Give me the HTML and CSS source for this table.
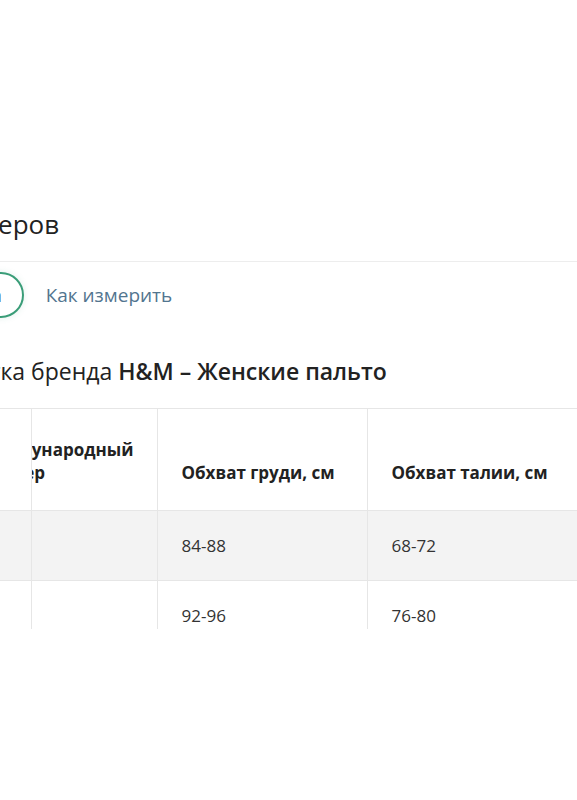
FILE: index.html
```html
<!DOCTYPE html>
<html lang="ru">
<head>
  <meta charset="UTF-8" />
  <meta name="viewport" content="width=device-width, initial-scale=1.0" />
  <title>Таблица размеров</title>
  <link rel="stylesheet" href="styles.css">
</head>
<body>
  <div class="modal">
    <h2 class="title">Таблица размеров</h2>
    <div class="tabs">
      <button class="tab active">Таблица</button>
      <a class="tab-link" href="#">Как измерить</a>
    </div>
    <h3 class="subtitle">Размерная сетка бренда <b>H&amp;M – Женские пальто</b></h3>
    <div class="table-wrap">
      <table class="sizes">
        <colgroup>
          <col class="c-ru">
          <col class="c-int">
          <col class="c-chest">
          <col class="c-waist">
        </colgroup>
        <thead>
          <tr>
            <th class="sticky"></th>
            <th class="under"><div class="shift">Международный размер</div></th>
            <th>Обхват груди, см</th>
            <th>Обхват талии, см</th>
          </tr>
        </thead>
        <tbody>
          <tr class="odd">
            <td class="sticky"></td>
            <td class="under"><div class="shift">XS</div></td>
            <td>84-88</td>
            <td>68-72</td>
          </tr>
          <tr>
            <td class="sticky"></td>
            <td class="under"><div class="shift">S</div></td>
            <td>92-96</td>
            <td>76-80</td>
          </tr>
        </tbody>
      </table>
    </div>
  </div>
</body>
</html>
```

FILE: styles.css
```css
body {
  margin: 0;
  overflow: hidden;
  background: #fff;
  font-family: "Open Sans", Roboto, Arial, sans-serif;
  color: #222;
}
.modal {
  padding-top: 205px;
}
.title {
  margin: 0 0 0 -177px;
  font-size: 26px;
  font-weight: 400;
  line-height: 38px;
  white-space: nowrap;
  padding-bottom: 18px;
  border-bottom: 1px solid #ededed;
}
.tabs {
  display: flex;
  align-items: center;
  gap: 22px;
  margin-top: 10px;
}
.tab {
  flex-shrink: 0;
  margin-left: -94px;
  height: 46px;
  padding: 0 20px;
  border: 2px solid #3a9d78;
  border-radius: 23px;
  background: #fff;
  font-family: inherit;
  font-size: 18px;
  color: #222;
  box-shadow: 0 0 6px rgba(58, 157, 120, 0.15);
}
.tab-link {
  font-size: 19px;
  color: #52758f;
  text-decoration: none;
}
.subtitle {
  margin: 38px 0 0 -162px;
  font-size: 23px;
  font-weight: 400;
  line-height: 30px;
  white-space: nowrap;
}
.subtitle b {
  font-weight: 600;
}
.table-wrap {
  margin-top: 22px;
  height: 220px;
  overflow: hidden;
  border-top: 1px solid #e6e6e6;
}
.sizes {
  width: 640px;
  table-layout: fixed;
  border-collapse: collapse;
}
.c-ru { width: 31px; }
.c-int { width: 126px; }
.c-chest { width: 210px; }
.c-waist { width: 273px; }
.sizes th,
.sizes td {
  border: 1px solid #e6e6e6;
  border-top: none;
  padding: 0 24px;
  text-align: left;
}
.sizes th {
  height: 75px;
  vertical-align: bottom;
  padding-bottom: 26px;
  font-size: 17px;
  font-weight: 700;
  line-height: 23px;
}
.sizes td {
  height: 69px;
  font-size: 17px;
  color: #333;
}
.sizes .sticky {
  border-left: none;
  padding: 0;
}
.sizes .under {
  padding: 0;
  overflow: hidden;
}
.sizes th.under {
  padding-bottom: 26px;
}
.shift {
  margin-left: -52px;
  width: 170px;
}
.odd td {
  background: #f3f3f3;
}
```
